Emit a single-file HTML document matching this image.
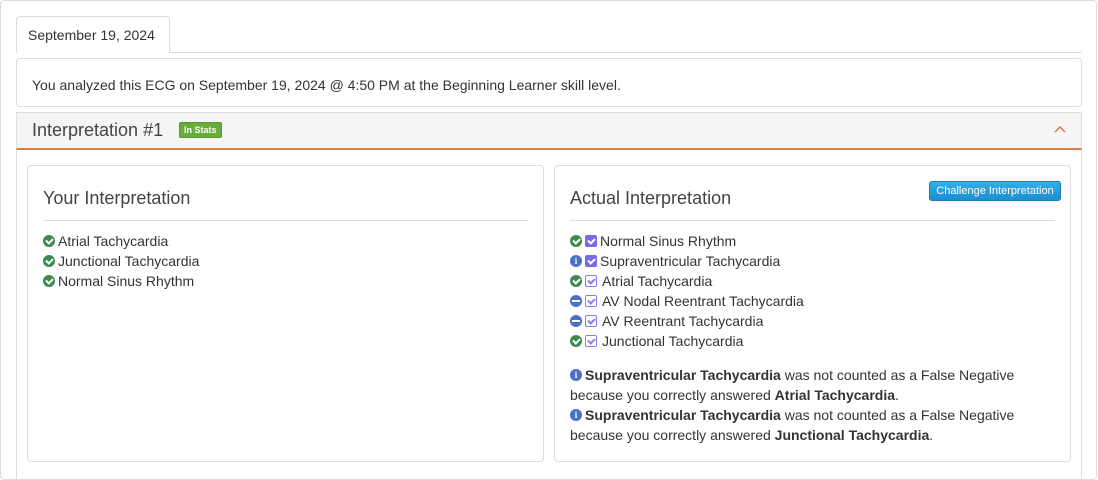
<!DOCTYPE html>
<html><head><meta charset="utf-8"><style>
*{box-sizing:border-box;margin:0;padding:0}
body{width:1098px;height:466px;overflow:hidden;background:#fff;font-family:"Liberation Sans",sans-serif;color:#333;font-size:14px;position:relative}
.abs{position:absolute}
.outer{left:0;top:0;width:1097px;height:480px;border:1px solid #ddd;border-radius:4px}
.tab{left:16px;top:16px;width:154px;height:37px;border:1px solid #ddd;border-bottom:none;border-radius:4px 4px 0 0;background:#fff;font-size:14px;padding:10px 0 0 11px}
.tabline{left:169px;top:52px;width:913px;height:1px;background:#ddd}
.info{left:16px;top:58px;width:1066px;height:49px;border:1px solid #ddd;border-radius:4px;padding:18px 0 0 15px}
.phead{left:16px;top:112px;width:1066px;height:38px;background:#f5f5f5;border:1px solid #ddd;border-bottom:2px solid #e07b45}
.ptitle{left:15px;top:7px;font-size:18px;color:#444}
.badge{left:162px;top:9px;background:#6aac3c;border:1px solid #5a9a30;color:#fff;font-size:9px;font-weight:bold;padding:2px 4px;border-radius:2px}
.pbody{left:16px;top:150px;width:1066px;height:330px;border-left:1px solid #ddd;border-right:1px solid #ddd}
.card{top:165px;width:517px;height:297px;border:1px solid #ddd;border-radius:4px}
.card h3{position:absolute;left:15px;top:22px;font-weight:normal;font-size:18px;color:#444}
.card .hr{position:absolute;left:15px;right:15px;top:54px;height:1px;background:#ddd}
.list{position:absolute;left:15px;top:65px;line-height:20px}
.ic{display:inline-block;width:12px;height:12px;border-radius:50%;vertical-align:-1px;position:relative;margin-right:3px;overflow:hidden}
.ok{background:#3d8b4f}
.ok:after{content:"";position:absolute;left:3px;top:2.5px;width:5px;height:3px;border-left:2px solid #fff;border-bottom:2px solid #fff;transform:rotate(-45deg)}
.inf{background:#4a70c8;color:#fff;font-size:9px;font-weight:bold;text-align:center;line-height:12px;font-family:"Liberation Serif",serif}
.no{background:#4a70c8}
.no:after{content:"";position:absolute;left:2px;top:5px;width:8px;height:2px;background:#fff}
.cb{display:inline-block;width:12px;height:12px;border-radius:2px;background:#7b68ee;vertical-align:-1px;position:relative;margin-right:3px}
.cb:after{content:"";position:absolute;left:3px;top:2.5px;width:5px;height:3px;border-left:2px solid #fff;border-bottom:2px solid #fff;transform:rotate(-45deg)}
.cbo{background:#fff;border:1.5px solid #8a7cf0;border-radius:2px;margin-right:5px}
.cbo:after{border-color:#8a7cf0;left:2px;top:1.5px}
.btn{right:9px;top:15px;width:132px;height:20px;text-align:center;background:linear-gradient(#33aee8,#1b8fd0);border:1px solid #1a7db5;color:#fff;font-size:11px;line-height:18px;border-radius:3px}
.notes{position:absolute;left:15px;top:199px;line-height:20px}
</style></head><body>
<div class="abs outer"></div>
<div class="abs tab">September 19, 2024</div>
<div class="abs tabline"></div>
<div class="abs info">You analyzed this ECG on September 19, 2024 @ 4:50 PM at the Beginning Learner skill level.</div>
<div class="abs phead"><div class="abs ptitle">Interpretation #1</div><div class="abs badge">In Stats</div>
<svg class="abs" style="left:1037px;top:12px" width="12" height="8"><path d="M1 7 L6 2 L11 7" fill="none" stroke="#e07b45" stroke-width="1.5"/></svg></div>
<div class="abs pbody"></div>
<div class="abs card" style="left:27px"><h3>Your Interpretation</h3><div class="hr"></div>
<div class="list"><div><span class="ic ok"></span>Atrial Tachycardia</div><div><span class="ic ok"></span>Junctional Tachycardia</div><div><span class="ic ok"></span>Normal Sinus Rhythm</div></div></div>
<div class="abs card" style="left:554px"><h3>Actual Interpretation</h3><div class="abs btn">Challenge Interpretation</div><div class="hr"></div>
<div class="list">
<div><span class="ic ok"></span><span class="cb"></span>Normal Sinus Rhythm</div>
<div><span class="ic inf">i</span><span class="cb"></span>Supraventricular Tachycardia</div>
<div><span class="ic ok"></span><span class="cb cbo"></span>Atrial Tachycardia</div>
<div><span class="ic no"></span><span class="cb cbo"></span>AV Nodal Reentrant Tachycardia</div>
<div><span class="ic no"></span><span class="cb cbo"></span>AV Reentrant Tachycardia</div>
<div><span class="ic ok"></span><span class="cb cbo"></span>Junctional Tachycardia</div>
</div>
<div class="notes"><span class="ic inf">i</span><b>Supraventricular Tachycardia</b> was not counted as a False Negative<br>because you correctly answered <b>Atrial Tachycardia</b>.<br><span class="ic inf">i</span><b>Supraventricular Tachycardia</b> was not counted as a False Negative<br>because you correctly answered <b>Junctional Tachycardia</b>.</div>
</div>
</body></html>
